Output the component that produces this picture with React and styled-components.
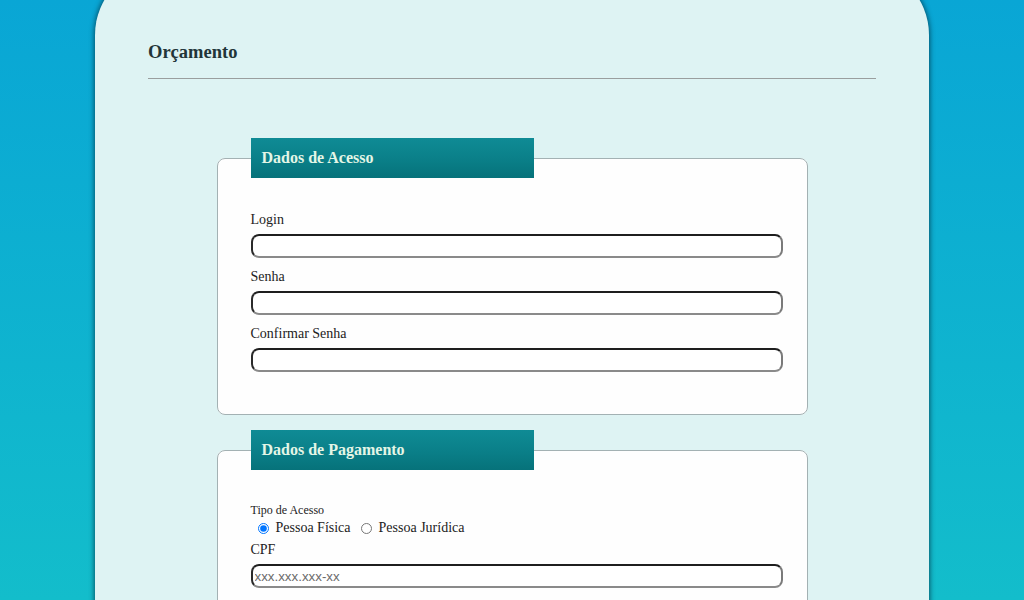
import React from "react";
import styled, { createGlobalStyle } from "styled-components";

const Global = createGlobalStyle`
  html { scrollbar-width: none; }
  html::-webkit-scrollbar { display: none; }
  body {
    margin: 0;
    min-height: 100vh;
    font-family: "Liberation Serif", "Times New Roman", serif;
    background: linear-gradient(180deg, #09a6d5 0%, #13bdcb 100%);
    background-attachment: fixed;
    overflow-x: hidden;
  }
`;

const Card = styled.main`
  box-sizing: border-box;
  width: 834px;
  margin: -35px auto 0;
  padding: 77px 53px 40px;
  background: #def3f3;
  border-radius: 70px 70px 0 0;
  box-shadow: 0 0 5px 1px rgba(0, 55, 75, 0.75);
  min-height: 900px;
`;

const Header = styled.header`
  padding-bottom: 15px;
  border-bottom: 1px solid #9a9e9e;
`;

const Title = styled.h2`
  margin: 0;
  font-size: 18.5px;
  line-height: 21px;
  font-weight: bold;
  color: #223538;
`;

const Form = styled.form`
  width: 591px;
  margin: 59px auto 0;
  display: flex;
  flex-direction: column;
  gap: 15px;
`;

const Fieldset = styled.fieldset`
  box-sizing: border-box;
  width: 591px;
  margin: 0;
  padding: 0 0 42px 33px;
  background: #fefefe;
  border: 1px solid #a3b1b3;
  border-radius: 8px;
  display: flex;
  flex-direction: column;
`;

const Legend = styled.legend`
  box-sizing: border-box;
  width: 283px;
  height: 40px;
  line-height: 40px;
  padding: 0 11px;
  margin: 0;
  font-size: 16px;
  font-weight: bold;
  color: #e4f6e6;
  background: linear-gradient(180deg, #0f8b95 0%, #0a7f88 55%, #06727a 100%);
`;

const Field = styled.div`
  display: flex;
  flex-direction: column;
  gap: ${(p) => (p.$gap === undefined ? 6 : p.$gap)}px;
  margin-top: ${(p) => (p.$top === undefined ? 11 : p.$top)}px;
`;

const Label = styled.label`
  font-size: ${(p) => p.$size || 14}px;
  line-height: ${(p) => (p.$size ? p.$size + 2 : 16)}px;
  color: #222;
`;

const Input = styled.input`
  box-sizing: border-box;
  width: 532px;
  height: 24px;
  padding: 0 2px;
  border: 2px solid;
  border-color: #1e1e1e #7a7a7a #8a8a8a #2a2a2a;
  border-radius: 8px;
  background: #fff;
  font-family: "Liberation Sans", Arial, sans-serif;
  font-size: 13.33px;
  color: #222;
  outline: none;
  &::placeholder {
    color: #6b6b6b;
  }
`;

const RadioRow = styled.div`
  display: flex;
  align-items: center;
  font-family: "Liberation Serif", "Times New Roman", serif;
  font-size: 14px;
  line-height: 16px;
  color: #222;
  margin-top: 3px;
`;

const RadioLabel = styled.label`
  display: flex;
  align-items: center;
  margin-right: 3px;
  input {
    margin: 0 7px 0 7px;
    width: 11px;
    height: 11px;
  }
`;

export default function App() {
  return (
    <>
      <Global />
      <Card>
        <Header>
          <Title>Orçamento</Title>
        </Header>
        <Form onSubmit={(e) => e.preventDefault()}>
          <Fieldset>
            <Legend>Dados de Acesso</Legend>
            <Field $top={34}>
              <Label htmlFor="login">Login</Label>
              <Input id="login" type="text" />
            </Field>
            <Field>
              <Label htmlFor="senha">Senha</Label>
              <Input id="senha" type="password" />
            </Field>
            <Field>
              <Label htmlFor="conf">Confirmar Senha</Label>
              <Input id="conf" type="password" />
            </Field>
          </Fieldset>
          <Fieldset>
            <Legend>Dados de Pagamento</Legend>
            <Field $top={33} $gap={0}>
              <Label $size={12}>Tipo de Acesso</Label>
              <RadioRow>
                <RadioLabel>
                  <input type="radio" name="tipo" defaultChecked />
                  Pessoa Física
                </RadioLabel>
                <RadioLabel>
                  <input type="radio" name="tipo" />
                  Pessoa Jurídica
                </RadioLabel>
              </RadioRow>
            </Field>
            <Field $top={6} $gap={6}>
              <Label htmlFor="cpf">CPF</Label>
              <Input id="cpf" type="text" placeholder="xxx.xxx.xxx-xx" />
            </Field>
          </Fieldset>
        </Form>
      </Card>
    </>
  );
}
